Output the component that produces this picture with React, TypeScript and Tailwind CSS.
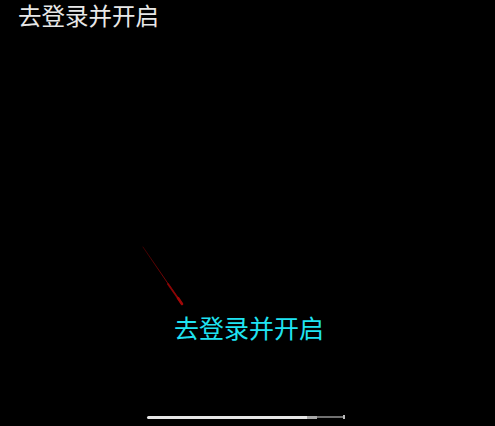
export default function App() {
  const font = { fontFamily: '"Noto Sans CJK SC", "Noto Sans", sans-serif' };

  return (
    <div className="flex h-[426px] w-[495px] flex-col bg-black" style={font}>
      <div className="pl-[18px] pt-[1px] text-[23.5px] leading-[28px] text-[#e8e8e8]">
        去登录并开启
      </div>

      <div className="mt-[216px] pl-[142px]">
        <svg width="44" height="62" viewBox="0 0 44 62" aria-hidden="true">
          <defs>
            <linearGradient id="redline" x1="0" y1="0" x2="0" y2="1">
              <stop offset="0" stopColor="#3a0000" />
              <stop offset="1" stopColor="#a00808" />
            </linearGradient>
          </defs>
          <path d="M1 2 L40 59" stroke="url(#redline)" strokeWidth="1" strokeLinecap="round" />
          <path d="M26 39 L40 59" stroke="#8c0505" strokeWidth="1.8" strokeLinecap="round" />
          <path d="M36 53 L40 59" stroke="#a00808" strokeWidth="2.6" strokeLinecap="round" />
        </svg>
      </div>

      <div className="mt-[8px] pl-[174px] text-[25px] leading-none text-[#1fe3f2]">
        去登录并开启
      </div>

      <div className="mt-auto flex items-center pb-[7px] pl-[147px]">
        <div className="h-[3px] w-[160px] rounded-l-full bg-[#e6e6e6]" />
        <div className="h-[3px] w-[10px] bg-[#a8a8a8]" />
        <div className="h-[1.5px] w-[26px] bg-[#707070]" />
        <div className="h-[4px] w-[2px] bg-[#bbbbbb]" />
      </div>
    </div>
  );
}
